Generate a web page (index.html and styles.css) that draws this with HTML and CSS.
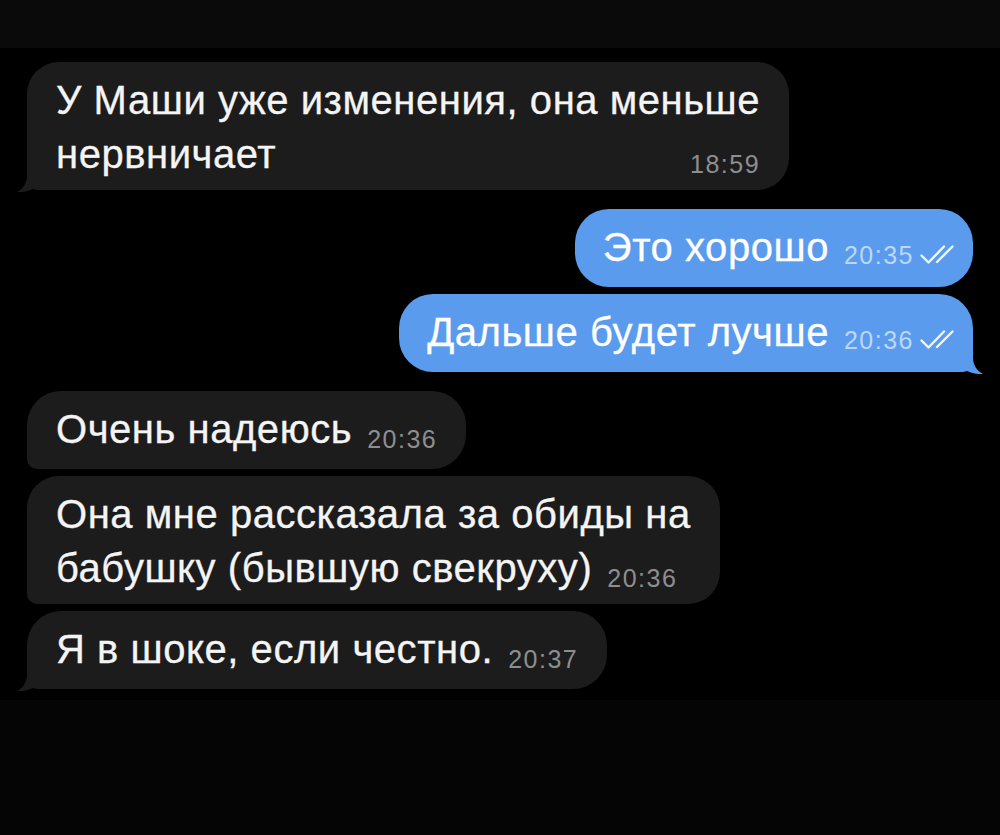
FILE: index.html
```html
<!DOCTYPE html>
<html lang="ru">
<head>
<meta charset="utf-8">
<title>Чат</title>
<link rel="stylesheet" href="styles.css">
</head>
<body>
<div class="screen">
  <div class="top-band"></div>
  <main class="chat">
    <div class="bubble bubble--in bubble--multi">
      У Маши уже изменения, она меньше<br>нервничает<span class="time time--end">18:59</span>
      <svg class="tail tail--left" width="26" height="22" viewBox="0 0 26 22"><path d="M10 0 L10 6 C10 13 6 19 0 22 C7 22.5 14 20.5 18 17.5 C20 19 22 20 26 20 L26 0 Z"/></svg>
    </div>

    <div class="bubble bubble--out group-start">
      Это хорошо<span class="time">20:35<svg class="checks" width="34" height="20" viewBox="0 0 34 20"><path d="M1.5 10.5 L8.5 17.5 L24 1.5 M17 17 L32.5 1.5"/></svg></span>
    </div>
    <div class="bubble bubble--out bubble--tailed">
      Дальше будет лучше<span class="time">20:36<svg class="checks" width="34" height="20" viewBox="0 0 34 20"><path d="M1.5 10.5 L8.5 17.5 L24 1.5 M17 17 L32.5 1.5"/></svg></span>
      <svg class="tail tail--right" width="26" height="22" viewBox="0 0 26 22"><path d="M10 0 L10 6 C10 13 6 19 0 22 C7 22.5 14 20.5 18 17.5 C20 19 22 20 26 20 L26 0 Z"/></svg>
    </div>

    <div class="bubble bubble--in group-start">
      Очень надеюсь<span class="time">20:36</span>
    </div>
    <div class="bubble bubble--in bubble--multi">
      Она мне рассказала за обиды на<br>бабушку (бывшую свекруху)<span class="time">20:36</span>
    </div>
    <div class="bubble bubble--in">
      Я в шоке, если честно.<span class="time">20:37</span>
      <svg class="tail tail--left" width="26" height="22" viewBox="0 0 26 22"><path d="M10 0 L10 6 C10 13 6 19 0 22 C7 22.5 14 20.5 18 17.5 C20 19 22 20 26 20 L26 0 Z"/></svg>
    </div>
  </main>
  <div class="bottom-band"></div>
</div>
</body>
</html>
```

FILE: styles.css
```css
html, body {
  margin: 0;
  padding: 0;
  background: #000;
}

.screen {
  width: 1000px;
  height: 835px;
  display: flex;
  flex-direction: column;
  font-family: "Liberation Sans", Arial, sans-serif;
  color: #f4f4f4;
}

.top-band {
  height: 48px;
  background: #0a0a0a;
  flex: none;
}

.chat {
  height: 652px;
  flex: none;
  background: #000;
  box-sizing: border-box;
  padding: 14px 27px 0;
  display: flex;
  flex-direction: column;
  gap: 7px;
}

.bottom-band {
  flex: 1;
  background: #050505;
}

.bubble {
  position: relative;
  font-size: 40px;
  line-height: 54px;
  letter-spacing: 0.55px;
  padding: 11px 29px 13px 29px;
  border-radius: 34px;
  white-space: nowrap;
  -webkit-text-stroke: 0.3px currentColor;
}

.bubble--multi {
  padding-bottom: 9px;
  border-radius: 32px;
}

.bubble--in {
  align-self: flex-start;
  background: #1c1c1d;
  border-bottom-left-radius: 10px;
}

.bubble--out {
  align-self: flex-end;
  background: #5b9bee;
  color: #ffffff;
  padding-left: 28px;
  padding-right: 19px;
}

.bubble--tailed {
  border-bottom-right-radius: 10px;
}

.group-start {
  margin-top: 12px;
}

.time {
  display: inline-block;
  font-size: 25px;
  letter-spacing: 1.5px;
  line-height: 24px;
  margin-left: 15px;
  vertical-align: -5px;
  color: #8e8e90;
  -webkit-text-stroke: 0;
}

.bubble--out .time {
  color: #bcd7fa;
  vertical-align: -3px;
}

.time--end {
  float: right;
  margin-top: 25px;
}

.checks {
  display: inline-block;
  vertical-align: -1px;
  margin-left: 6px;
  fill: none;
  stroke: #f2f7ff;
  stroke-width: 2.4;
  stroke-linecap: round;
  stroke-linejoin: round;
}

.tail {
  position: absolute;
  bottom: -2px;
}

.tail--left {
  left: -10px;
  fill: #1c1c1d;
}

.tail--right {
  right: -10px;
  transform: scaleX(-1);
  fill: #5b9bee;
}
```
